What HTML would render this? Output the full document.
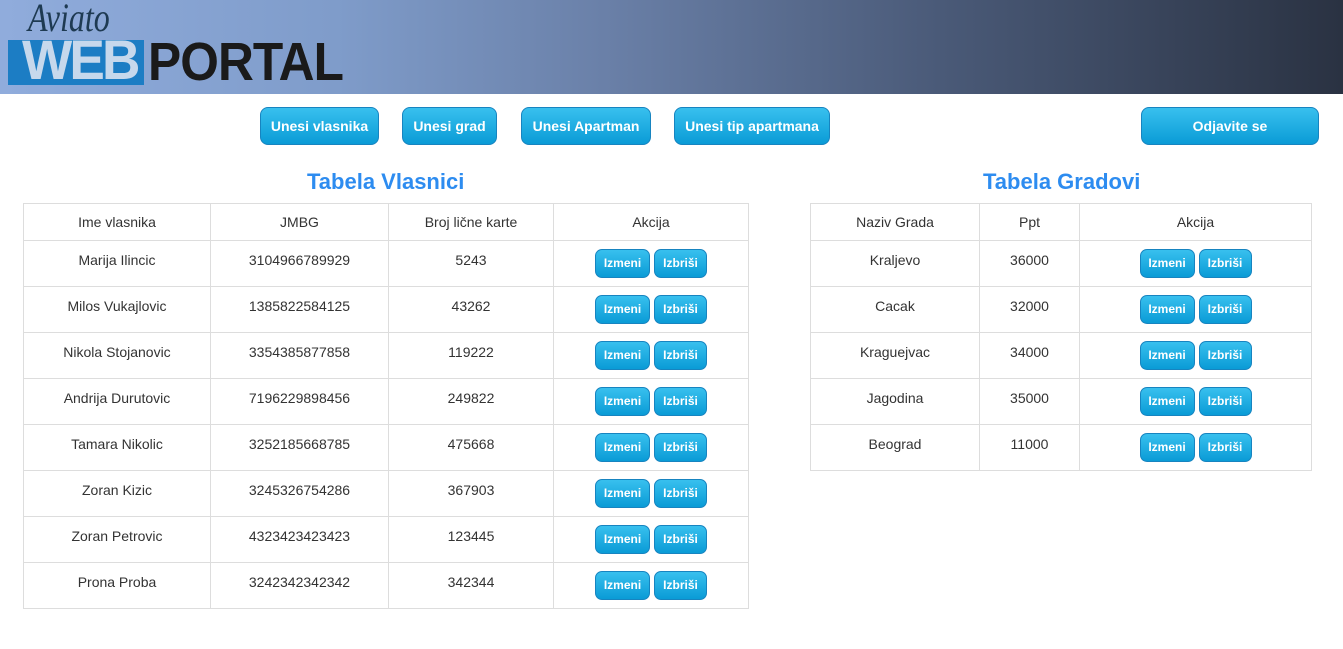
<!DOCTYPE html>
<html><head><meta charset="utf-8"><style>
body{margin:0;width:1343px;height:649px;overflow:hidden;background:#fff;font-family:"Liberation Sans",Arial,sans-serif;color:#333}
.hdr{height:94px;background:linear-gradient(90deg,#90acdc 0%,#7f9cca 25%,#6a80a8 45%,#4a5a78 70%,#2a3242 100%);position:relative}
.btn{position:absolute;top:107px;height:38px;box-sizing:border-box;border:1px solid #1784c0;border-radius:8px;background:linear-gradient(#38c0ee,#0a9bd6);color:#fff;font-weight:bold;font-size:14px;display:flex;align-items:center;justify-content:center}
h2{position:absolute;margin:0;font-size:22px;color:#2d8cf0;font-weight:bold;top:169px}
table{position:absolute;border-collapse:collapse;font-size:14px;top:203px}
td,th{border:1px solid #ddd;text-align:center;font-weight:normal;padding:0}
th{height:36px}
td{height:46px;vertical-align:top;padding-top:11px;box-sizing:border-box}
.s{display:inline-block;height:29px;line-height:27px;box-sizing:border-box;border:1px solid #1784c0;border-radius:7px;background:linear-gradient(#38c0ee,#0a9bd6);color:#fff;font-weight:bold;font-size:12px;margin-top:-3px}
.a{width:55px}.b{width:53px;margin-left:4px}
</style></head><body>
<div class="hdr">
<div style="position:absolute;left:28px;top:-6px;font:italic 40px 'Liberation Serif',serif;color:#1e3a52;transform:scaleX(.8);transform-origin:left">Aviato</div>
<div style="position:absolute;left:8px;top:40px;width:136px;height:45px;background:#1c7dc4"></div>
<div style="position:absolute;left:22px;top:32px;font:bold 56px 'Liberation Sans',sans-serif;color:#c6d8ec;letter-spacing:-3px;transform:scaleX(.95);transform-origin:left;line-height:56px">WEB</div>
<div style="position:absolute;left:148px;top:35px;font:bold 54px 'Liberation Sans',sans-serif;color:#1a1a1a;line-height:54px;letter-spacing:-1px;transform:scaleX(.92);transform-origin:left">PORTAL</div>
</div>
<div class="btn" style="left:260px;width:119px">Unesi vlasnika</div>
<div class="btn" style="left:402px;width:95px">Unesi grad</div>
<div class="btn" style="left:521px;width:130px">Unesi Apartman</div>
<div class="btn" style="left:674px;width:156px">Unesi tip apartmana</div>
<div class="btn" style="left:1141px;width:178px">Odjavite se</div>
<h2 style="left:307px">Tabela Vlasnici</h2>
<h2 style="left:983px">Tabela Gradovi</h2>
<table style="left:23px;width:726px">
<tr><th style="width:186px">Ime vlasnika</th><th style="width:177px">JMBG</th><th style="width:164px">Broj lične karte</th><th>Akcija</th></tr>
<tr><td>Marija Ilincic</td><td>3104966789929</td><td>5243</td><td><span class="s a">Izmeni</span><span class="s b">Izbriši</span></td></tr>
<tr><td>Milos Vukajlovic</td><td>1385822584125</td><td>43262</td><td><span class="s a">Izmeni</span><span class="s b">Izbriši</span></td></tr>
<tr><td>Nikola Stojanovic</td><td>3354385877858</td><td>119222</td><td><span class="s a">Izmeni</span><span class="s b">Izbriši</span></td></tr>
<tr><td>Andrija Durutovic</td><td>7196229898456</td><td>249822</td><td><span class="s a">Izmeni</span><span class="s b">Izbriši</span></td></tr>
<tr><td>Tamara Nikolic</td><td>3252185668785</td><td>475668</td><td><span class="s a">Izmeni</span><span class="s b">Izbriši</span></td></tr>
<tr><td>Zoran Kizic</td><td>3245326754286</td><td>367903</td><td><span class="s a">Izmeni</span><span class="s b">Izbriši</span></td></tr>
<tr><td>Zoran Petrovic</td><td>4323423423423</td><td>123445</td><td><span class="s a">Izmeni</span><span class="s b">Izbriši</span></td></tr>
<tr><td>Prona Proba</td><td>3242342342342</td><td>342344</td><td><span class="s a">Izmeni</span><span class="s b">Izbriši</span></td></tr>
</table>
<table style="left:810px;width:502px">
<tr><th style="width:168px">Naziv Grada</th><th style="width:99px">Ppt</th><th>Akcija</th></tr>
<tr><td>Kraljevo</td><td>36000</td><td><span class="s a">Izmeni</span><span class="s b">Izbriši</span></td></tr>
<tr><td>Cacak</td><td>32000</td><td><span class="s a">Izmeni</span><span class="s b">Izbriši</span></td></tr>
<tr><td>Kraguejvac</td><td>34000</td><td><span class="s a">Izmeni</span><span class="s b">Izbriši</span></td></tr>
<tr><td>Jagodina</td><td>35000</td><td><span class="s a">Izmeni</span><span class="s b">Izbriši</span></td></tr>
<tr><td>Beograd</td><td>11000</td><td><span class="s a">Izmeni</span><span class="s b">Izbriši</span></td></tr>
</table>
</body></html>
